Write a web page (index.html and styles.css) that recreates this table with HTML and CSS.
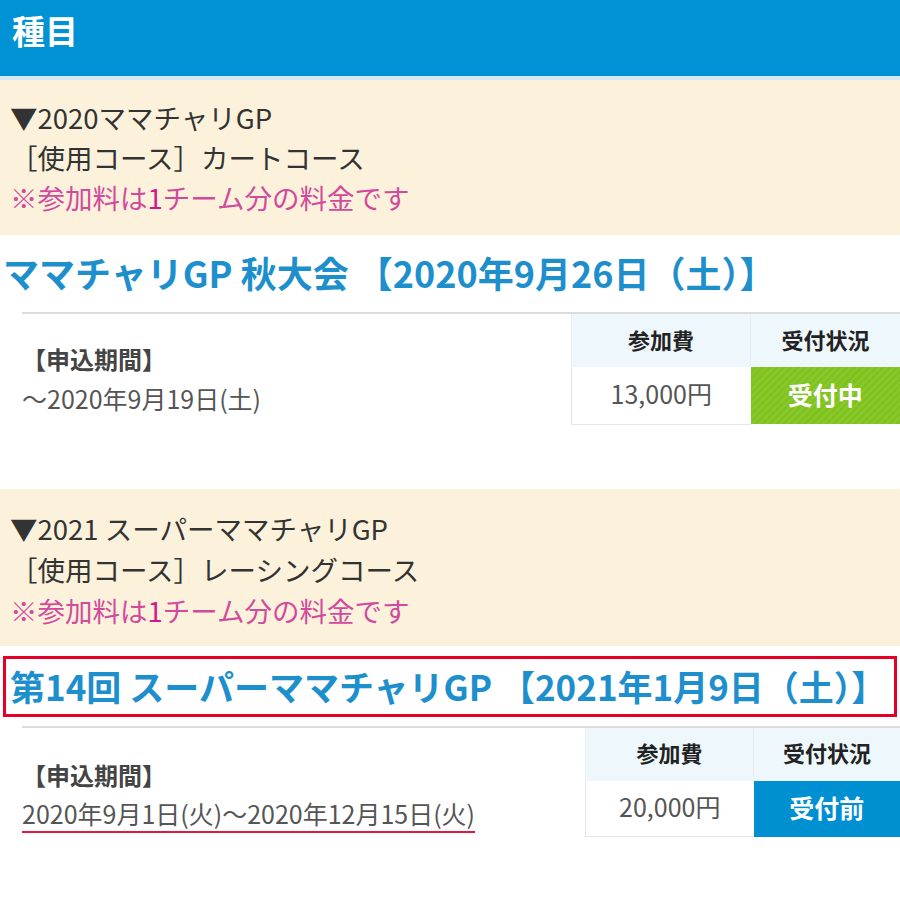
FILE: index.html
```html
<!DOCTYPE html>
<html lang="ja">
<head>
<meta charset="utf-8">
<link rel="stylesheet" href="styles.css">
</head>
<body>
<header class="page-title">種目</header>

<section class="course">
  <p class="course-line">▼2020ママチャリGP</p>
  <p class="course-line">［使用コース］カートコース</p>
  <p class="course-note">※参加料は<span class="num">1</span>チーム分の料金です</p>
</section>
<h2 class="event-title">ママチャリGP 秋大会 【2020年9月26日（土）】</h2>
<div class="event-row">
  <div class="period">
    <p class="period-label">【申込期間】</p>
    <p class="period-date">～2020年9月19日(土)</p>
  </div>
  <table class="fee-table fee-table--a">
    <tr><th>参加費</th><th>受付状況</th></tr>
    <tr><td class="fee">13,000円</td><td class="status status--open">受付中</td></tr>
  </table>
</div>

<section class="course course--second">
  <p class="course-line">▼2021 スーパーママチャリGP</p>
  <p class="course-line">［使用コース］レーシングコース</p>
  <p class="course-note">※参加料は<span class="num">1</span>チーム分の料金です</p>
</section>
<h2 class="event-title event-title--boxed">第14回 スーパーママチャリGP 【2021年1月9日（土）】</h2>
<div class="event-row event-row--second">
  <div class="period">
    <p class="period-label">【申込期間】</p>
    <p class="period-date"><span class="marked">2020年9月1日(火)～2020年12月15日(火)</span></p>
  </div>
  <table class="fee-table fee-table--b">
    <tr><th>参加費</th><th>受付状況</th></tr>
    <tr><td class="fee">20,000円</td><td class="status status--before">受付前</td></tr>
  </table>
</div>
</body>
</html>
```

FILE: styles.css
```css
* { box-sizing: border-box; }
html, body {
  margin: 0;
  padding: 0;
  background: #fff;
  font-family: "Noto Sans CJK JP", "Noto Sans", sans-serif;
  color: #333;
}
p { margin: 0; }

.page-title {
  height: 80px;
  background: #0092d4;
  border-bottom: 4px solid #d3e8f2;
  color: #fff;
  font-size: 33px;
  font-weight: 700;
  line-height: 60px;
  padding-left: 12px;
}

.course {
  background: #fcf2dc;
  padding: 17px 10px 18px;
  font-size: 27.5px;
  line-height: 40px;
}
.course--second {
  margin-top: 64px;
  padding: 19px 10px 15px;
  line-height: 41px;
}
.course-line { color: #333; }
.course-note { color: #d24a9c; }
.course-note .num { color: #d2178e; }

.event-title {
  margin: 12px 0 15px;
  padding-left: 3px;
  font-size: 36px;
  font-weight: 700;
  line-height: 50px;
  color: #1e8fcd;
  white-space: nowrap;
  letter-spacing: 0;
}
.event-title--boxed {
  margin: 10px 3px 9px;
  border: 3px solid #e60026;
  padding-left: 4px;
  font-size: 35px;
  line-height: 53px;
  height: 61px;
}

.event-row {
  margin-left: 22px;
  border-top: 2px solid #dcdcdc;
  display: flex;
  align-items: flex-start;
}
.period {
  flex: 1;
  padding-top: 27px;
}
.event-row--second .period { padding-top: 29px; }
.period-label {
  font-size: 24px;
  font-weight: 700;
  line-height: 36px;
  color: #444;
}
.period-date {
  font-size: 25px;
  line-height: 42px;
  color: #555;
}
.event-row--second .period-date { line-height: 40px; }
.marked {
  text-decoration: underline;
  text-decoration-color: #e8163c;
  text-decoration-thickness: 2px;
  text-underline-offset: 7px;
}

.fee-table {
  border-collapse: collapse;
  flex: none;
}
.fee-table--a { width: 329px; }
.fee-table--a th:first-child { width: 179px; }
.fee-table--b { width: 315px; }
.fee-table--b th:first-child { width: 168px; }
.fee-table th {
  background: #eef7fc;
  height: 53px;
  font-size: 22px;
  font-weight: 700;
  color: #222;
  border-left: 1px solid #e6eef2;
  padding: 0 0 4px;
}
.fee-table td {
  height: 57px;
  padding: 0 0 4px;
  text-align: center;
  font-size: 25px;
}
.fee-table--b td { height: 56px; }
.fee-table .fee {
  color: #555;
  border-left: 1px solid #e6e6e6;
  border-bottom: 1px solid #e6e6e6;
}
.status {
  color: #fff;
  font-weight: 700;
}
.status--open {
  background-color: #80c31e;
  background-image: repeating-linear-gradient(135deg, rgba(255,255,255,0.08) 0 2px, transparent 2px 5px);
}
.status--before { background: #0090d2; }
```
